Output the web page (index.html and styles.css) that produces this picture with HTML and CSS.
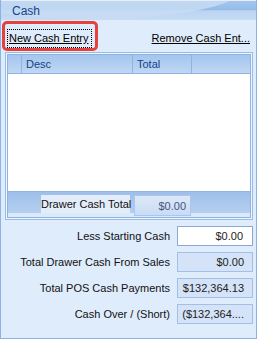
FILE: index.html
```html
<!DOCTYPE html>
<html lang="en">
<head>
<meta charset="UTF-8" />
<title>Cash</title>
<link rel="stylesheet" href="styles.css">
</head>
<body>
<div class="panel">

  <div class="panel-head"><span class="panel-title">Cash</span></div>

  <!-- ссылки над таблицей -->
  <div class="link-row">
    <div class="mark">
      <span class="focus"><a class="lnk" href="#">New Cash Entry</a></span>
    </div>
    <a class="lnk lnk-remove" href="#">Remove Cash Ent...</a>
  </div>

  <!-- таблица -->
  <div class="grid">
    <div class="grid-in">
      <div class="grid-head">
        <div class="col col-ind"></div>
        <div class="col col-desc">Desc</div>
        <div class="col col-total">Total</div>
        <div class="col col-rest"></div>
      </div>
      <div class="grid-body"></div>
      <div class="grid-foot">
        <span class="foot-label">Drawer Cash Total</span>
        <span class="foot-val">$0.00</span>
      </div>
    </div>
  </div>

  <!-- итоги -->
  <div class="sums">
    <div class="sum-row">
      <span class="sum-label">Less Starting Cash</span>
      <span class="box box-edit">$0.00</span>
    </div>
    <div class="sum-row">
      <span class="sum-label">Total Drawer Cash From Sales</span>
      <span class="box">$0.00</span>
    </div>
    <div class="sum-row">
      <span class="sum-label">Total POS Cash Payments</span>
      <span class="box">$132,364.13</span>
    </div>
    <div class="sum-row">
      <span class="sum-label">Cash Over / (Short)</span>
      <span class="box">($132,364....</span>
    </div>
  </div>

</div>
</body>
</html>
```

FILE: styles.css
```css
html,body{margin:0;padding:0}
body{background:#dfecfc;font-family:"Liberation Sans",Arial,sans-serif;font-size:11px;color:#000}
.panel{width:257px;height:339px;box-sizing:border-box;border:1px solid #8db2e3;border-top:none;background:#dfecfc;position:relative;overflow:hidden}

.panel-head{position:relative;height:20px;border-top:1px solid #e6effa;box-sizing:border-box;
            background:linear-gradient(#a3c6ee 0,#95bce9 45%,#bcd4f2 52%,#c6dbf4 100%);overflow:hidden}
.panel-head::before{content:"";position:absolute;left:-60px;top:-40px;width:300px;height:58px;border-radius:50%;
                    background:linear-gradient(#c4d9f3,#c8dcf4);opacity:.85}
.panel-title{position:relative;display:block;padding:3px 0 0 11px;color:#15428b;font-size:12px;line-height:14px}

.link-row{display:flex;justify-content:space-between;align-items:flex-start;height:32px;padding-top:1px;box-sizing:border-box}
.mark{margin-left:1px;width:96px;height:30px;box-sizing:border-box;border:3px solid #e5413d;border-radius:5px;padding:6px 0 0 3px}
.focus{display:inline-block;outline:1px dotted #000;outline-offset:0;padding:2px 3px 2px 1px;line-height:13px}
.lnk{color:#000;text-decoration:underline;font-size:11px;white-space:nowrap}
.lnk-remove{margin:11px 6px 0 0;line-height:13px}

.grid{margin:0 3px 0 4px;height:168px;border:1px solid #99bde9;padding:1px;box-sizing:border-box;background:#eef5fd}
.grid-in{height:100%;border:1px solid #8fb4e4;box-sizing:border-box;display:flex;flex-direction:column;background:#fff}
.grid-head{display:flex;height:19px;border-bottom:1px solid #8fb4e4;box-sizing:border-box;
           background:linear-gradient(#a4c5ed,#c0d7f3);color:#15428b;font-size:11px}
.col{border-right:1px solid #8fb4e4;padding:3px 0 0 4px;box-sizing:border-box}
.col-ind{width:14px;padding:0}
.col-desc{width:111px}
.col-total{width:59px}
.col-rest{flex:1;border-right:none}
.grid-body{flex:1;background:#fff}
.grid-foot{height:26px;border-top:1px solid #8fb4e4;box-sizing:border-box;display:flex;align-items:flex-start;padding:3px 0 0 0;
           background:linear-gradient(#9ebfea 0,#b6cff0 85%,#dce9f9 86%,#dce9f9 100%)}
.foot-label{margin-left:33px;width:89px;height:18px;line-height:18px;background:#e3edf9;color:#111;font-size:11px;
            text-align:right;white-space:nowrap;box-sizing:border-box}
.foot-val{margin-left:4px;width:57px;height:21px;box-sizing:border-box;border:1px solid #a9c6ec;
          background:linear-gradient(#dce8f8,#c9dcf4);color:#46567a;text-align:right;padding:4px 4px 0 0;font-size:11px}

.sums{display:flex;flex-direction:column;gap:6px;padding-top:6px}
.sum-row{display:flex;justify-content:flex-end;align-items:center;height:20px;padding-right:3px}
.sum-label{margin-right:7px;font-size:11px;color:#111;white-space:nowrap}
.box{width:76px;height:20px;box-sizing:border-box;border:1px solid #a3bfe6;background:#d4e3f7;
     text-align:right;padding:3px 8px 0 0;font-size:11px;color:#222;white-space:nowrap;overflow:hidden}
.box-edit{background:#fff;border-color:#8ea8cf;padding-right:9px}
```
